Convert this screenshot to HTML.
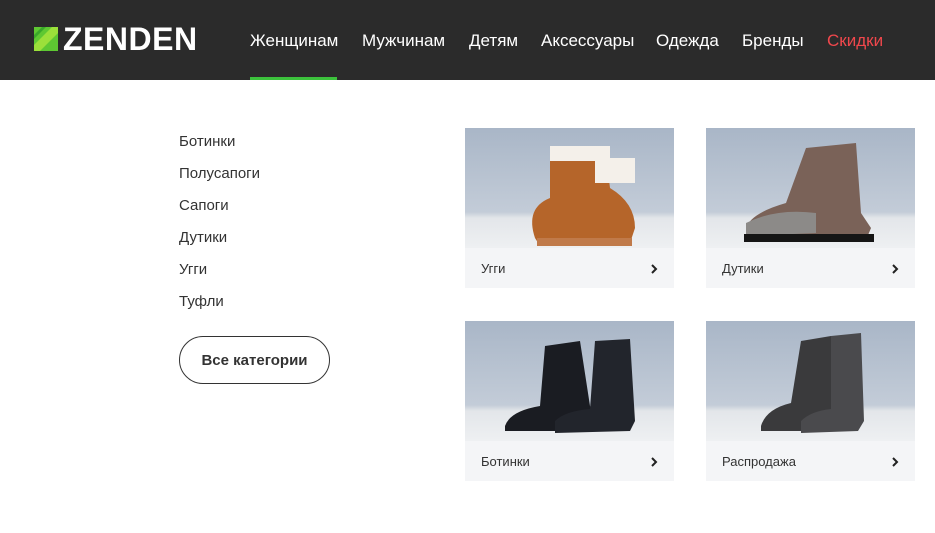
<!DOCTYPE html>
<html><head><meta charset="utf-8"><style>
*{margin:0;padding:0;box-sizing:border-box}
body{width:935px;height:533px;background:#fff;font-family:"Liberation Sans",sans-serif;position:relative;overflow:hidden}
.hdr{position:absolute;left:0;top:0;width:935px;height:80px;background:#2b2b2b}
.logo{position:absolute;left:34px;top:27px}
.logotxt{position:absolute;left:63px;top:21px;color:#fff;font-weight:bold;font-size:32px;letter-spacing:0.5px}
.nav{position:absolute;top:31px;color:#fff;font-size:17px}
.ul{position:absolute;left:250px;top:77px;width:87px;height:3px;background:#3cc23c}
.cat{position:absolute;left:179px;font-size:15px;color:#333}
.btn{position:absolute;left:179px;top:336px;width:151px;height:48px;border:1px solid #333;border-radius:24px;font-size:15px;font-weight:bold;color:#333;text-align:center;line-height:48px}
.card{position:absolute;width:209px;height:160px;background:#f4f5f7}
.img{position:absolute;left:0;top:0;width:209px;height:120px;background:linear-gradient(#a9b6c7 0%,#c3ccd8 70%,#e3e6ea 75%,#eef0f2 100%)}
.cap{position:absolute;left:16px;top:133px;font-size:13px;color:#333}
.arr{position:absolute;right:16px;top:136px}
</style></head><body>
<div class="hdr">
<svg class="logo" width="24" height="24" viewBox="0 0 24 24"><rect width="24" height="24" fill="#5ec832"/><path d="M0 18L18 0H24V6L6 24H0Z" fill="#9be03a"/><path d="M0 8L8 0H12L0 12Z" fill="#3aa82a"/></svg>
<div class="logotxt">ZENDEN</div>
<div class="nav" style="left:250px">Женщинам</div>
<div class="nav" style="left:362px">Мужчинам</div>
<div class="nav" style="left:469px">Детям</div>
<div class="nav" style="left:541px">Аксессуары</div>
<div class="nav" style="left:656px">Одежда</div>
<div class="nav" style="left:742px">Бренды</div>
<div class="nav" style="left:827px;color:#f0474c">Скидки</div>
<div class="ul"></div>
</div>
<div class="cat" style="top:133px">Ботинки</div>
<div class="cat" style="top:165px">Полусапоги</div>
<div class="cat" style="top:197px">Сапоги</div>
<div class="cat" style="top:229px">Дутики</div>
<div class="cat" style="top:261px">Угги</div>
<div class="cat" style="top:293px">Туфли</div>
<div class="btn">Все категории</div>

<div class="card" style="left:465px;top:128px"><div class="img">
<svg width="209" height="120"><path d="M70 110 Q60 80 85 70 L85 20 L140 20 L145 60 Q170 75 170 100 L165 115 L75 118Z" fill="#b5652a"/><path d="M85 18 h60 v15 h-60z" fill="#f4f0ea"/><path d="M130 30 h40 v25 h-40z" fill="#f4f0ea"/><path d="M72 110 h95 v8 h-95z" fill="#c07a4a"/></svg>
</div><div class="cap">Угги</div><svg class="arr" width="8" height="10" viewBox="0 0 8 10"><path d="M2 1L6 5L2 9" stroke="#222" stroke-width="2" fill="none"/></svg></div>

<div class="card" style="left:706px;top:128px"><div class="img">
<svg width="209" height="120"><path d="M40 100 Q45 85 80 75 L100 20 L150 15 L155 85 L165 100 L160 112 L40 112Z" fill="#7a6258"/><path d="M40 95 Q70 80 110 85 L110 105 L40 108Z" fill="#8c8a88"/><path d="M38 106 h130 v8 h-130z" fill="#151515"/></svg>
</div><div class="cap">Дутики</div><svg class="arr" width="8" height="10" viewBox="0 0 8 10"><path d="M2 1L6 5L2 9" stroke="#222" stroke-width="2" fill="none"/></svg></div>

<div class="card" style="left:465px;top:321px"><div class="img">
<svg width="209" height="120"><path d="M40 105 Q45 90 75 85 L80 25 L115 20 L125 85 L135 100 L130 110 L40 110Z" fill="#1a1c22"/><path d="M90 100 Q100 90 125 88 L130 20 L165 18 L170 100 L165 110 L90 112Z" fill="#22252c"/></svg>
</div><div class="cap">Ботинки</div><svg class="arr" width="8" height="10" viewBox="0 0 8 10"><path d="M2 1L6 5L2 9" stroke="#222" stroke-width="2" fill="none"/></svg></div>

<div class="card" style="left:706px;top:321px"><div class="img">
<svg width="209" height="120"><path d="M55 105 Q60 88 85 82 L95 20 L125 15 L130 90 L135 102 L130 110 L55 110Z" fill="#3a3a3c"/><path d="M95 100 Q105 90 125 88 L125 15 L155 12 L158 100 L152 110 L95 112Z" fill="#4a4a4d"/></svg>
</div><div class="cap">Распродажа</div><svg class="arr" width="8" height="10" viewBox="0 0 8 10"><path d="M2 1L6 5L2 9" stroke="#222" stroke-width="2" fill="none"/></svg></div>
</body></html>
